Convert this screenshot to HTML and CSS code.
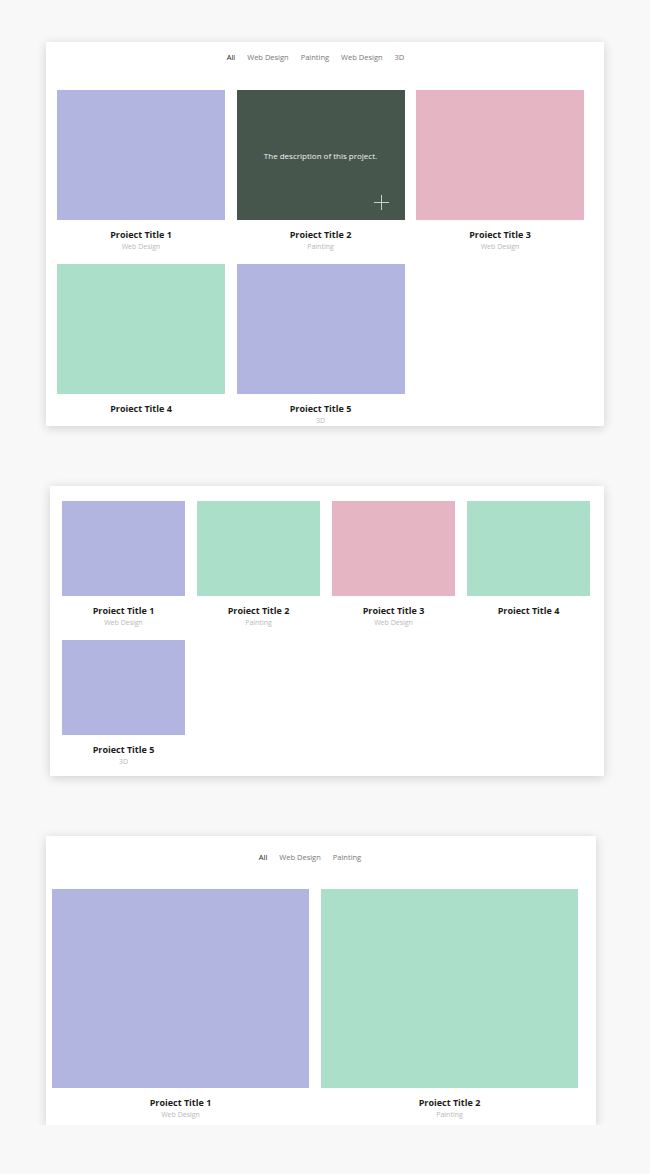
FILE: index.html
```html
<!DOCTYPE html>
<html lang="en">

<head>
    <meta charset="UTF-8">
    <meta name="viewport" content="width=device-width, initial-scale=1.0">
    <title>Portfolio Grid Layouts</title>
    <link rel="stylesheet" href="styles.css">
</head>

<body>
    <!-- Three columns with filter -->
    <div class="panel panel-three">
        <ul class="filter">
            <li class="active">All</li>
            <li>Web Design</li>
            <li>Painting</li>
            <li>Web Design</li>
            <li>3D</li>
        </ul>
        <div class="grid">
            <div class="project">
                <div class="thumb lavender"></div>
                <h3>Proiect Title 1</h3>
                <p>Web Design</p>
            </div>
            <div class="project">
                <div class="thumb dark">
                    <span class="desc">The description of this project.</span>
                    <span class="plus"></span>
                </div>
                <h3>Proiect Title 2</h3>
                <p>Painting</p>
            </div>
            <div class="project">
                <div class="thumb pink"></div>
                <h3>Proiect Title 3</h3>
                <p>Web Design</p>
            </div>
            <div class="project">
                <div class="thumb mint"></div>
                <h3>Proiect Title 4</h3>
                <p></p>
            </div>
            <div class="project">
                <div class="thumb lavender"></div>
                <h3>Proiect Title 5</h3>
                <p>3D</p>
            </div>
        </div>
    </div>

    <!-- Four columns, no filter -->
    <div class="panel panel-four">
        <div class="grid">
            <div class="project">
                <div class="thumb lavender"></div>
                <h3>Proiect Title 1</h3>
                <p>Web Design</p>
            </div>
            <div class="project">
                <div class="thumb mint"></div>
                <h3>Proiect Title 2</h3>
                <p>Painting</p>
            </div>
            <div class="project">
                <div class="thumb pink"></div>
                <h3>Proiect Title 3</h3>
                <p>Web Design</p>
            </div>
            <div class="project">
                <div class="thumb mint"></div>
                <h3>Proiect Title 4</h3>
                <p></p>
            </div>
            <div class="project">
                <div class="thumb lavender"></div>
                <h3>Proiect Title 5</h3>
                <p>3D</p>
            </div>
        </div>
    </div>

    <!-- Two columns with filter -->
    <div class="panel panel-two">
        <ul class="filter">
            <li class="active">All</li>
            <li>Web Design</li>
            <li>Painting</li>
        </ul>
        <div class="grid">
            <div class="project">
                <div class="thumb lavender"></div>
                <h3>Proiect Title 1</h3>
                <p>Web Design</p>
            </div>
            <div class="project">
                <div class="thumb mint"></div>
                <h3>Proiect Title 2</h3>
                <p>Painting</p>
            </div>
        </div>
    </div>
</body>

</html>
```

FILE: styles.css
```css
/* General Reset */
* {
    margin: 0;
    padding: 0;
    box-sizing: border-box;
}

body {
    font-family: 'Open Sans', 'Liberation Sans', sans-serif;
    background-color: #f8f8f8;
    color: #222;
    display: flex;
    flex-direction: column;
    align-items: flex-start;
    padding: 42px 0 0;
}

/* Panels */
.panel {
    background: #fff;
    box-shadow: 0 2px 10px rgba(0, 0, 0, 0.16);
    overflow: hidden;
}

.panel-three {
    width: 558px;
    height: 384px;
    margin-left: 46px;
    padding: 9px 20px 0 11px;
}

.panel-four {
    width: 554px;
    height: 290px;
    margin: 60px 0 0 50px;
    padding: 15px 15px 0 12px;
}

.panel-two {
    width: 550px;
    height: 289px;
    margin: 60px 0 0 46px;
    padding: 15px 18px 0 6px;
}

/* Filter menu */
.filter {
    list-style: none;
    display: flex;
    justify-content: center;
    gap: 12px;
    font-size: 7.5px;
    line-height: 12px;
    color: #777;
    padding-right: 10px;
}

.filter .active {
    color: #222;
}

.panel-three .filter {
    margin-bottom: 27px;
}

.panel-two .filter {
    margin-bottom: 26px;
}

/* Grid */
.grid {
    display: grid;
    column-gap: 11px;
    row-gap: 12px;
}

.panel-three .grid {
    grid-template-columns: repeat(3, 168px);
    column-gap: 11.5px;
}

.panel-three .thumb {
    height: 130px;
}

.panel-four .grid {
    grid-template-columns: repeat(4, 123px);
    column-gap: 12px;
}

.panel-four .thumb {
    height: 95px;
}

.panel-two .grid {
    grid-template-columns: repeat(2, 257px);
    column-gap: 12px;
}

.panel-two .thumb {
    height: 199px;
}

/* Project card */
.project {
    text-align: center;
}

.project h3 {
    font-size: 9px;
    font-weight: 700;
    line-height: 12px;
    margin-top: 9px;
    color: #1c1c1c;
}

.project p {
    font-size: 7px;
    line-height: 11px;
    min-height: 11px;
    color: #b8b8b8;
}

.thumb {
    position: relative;
    display: flex;
    justify-content: center;
    align-items: center;
}

.lavender {
    background-color: #b1b5e0;
}

.mint {
    background-color: #abdfca;
}

.pink {
    background-color: #e5b5c4;
}

/* Hover state with description */
.dark {
    background-color: #46564d;
}

.desc {
    font-size: 8px;
    color: #f2f2f2;
}

.plus {
    position: absolute;
    right: 16px;
    bottom: 10px;
    width: 15px;
    height: 15px;
}

.plus::before,
.plus::after {
    content: '';
    position: absolute;
    background: rgba(255, 255, 255, 0.7);
}

.plus::before {
    left: 7px;
    top: 0;
    width: 1px;
    height: 15px;
}

.plus::after {
    top: 7px;
    left: 0;
    width: 15px;
    height: 1px;
}
```
